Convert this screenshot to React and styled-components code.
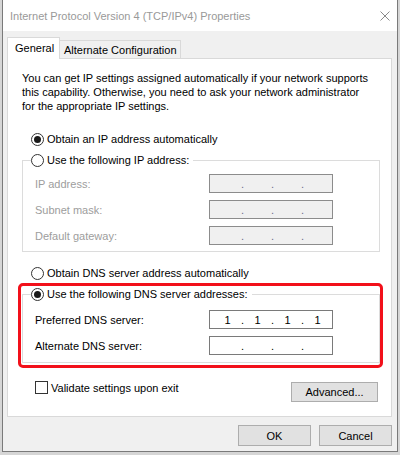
import React from "react";
import styled, { createGlobalStyle, css } from "styled-components";

const GlobalStyle = createGlobalStyle`
  html, body {
    margin: 0;
    padding: 0;
  }
  body {
    background: #d6d6d6;
    font-family: "Liberation Sans", Arial, sans-serif;
    font-size: 11px;
    color: #000;
  }
`;

const Window = styled.div`
  margin-left: 2px;
  width: 396px;
  box-sizing: border-box;
  border: 1px solid #7a7a7a;
  border-top: none;
  background: #f0f0f0;
`;

const TitleBar = styled.div`
  height: 31px;
  background: #fff;
  display: flex;
  align-items: center;
  justify-content: space-between;
  padding: 0 7px;
  color: #999;
`;

const Body = styled.div`
  padding: 6px 5px 5px 4px;
`;

const Tabs = styled.div`
  display: flex;
  align-items: flex-end;
  height: 22px;
  margin-bottom: -1px;
  position: relative;
  z-index: 1;
`;

const Tab = styled.div`
  box-sizing: border-box;
  border: 1px solid #d9d9d9;
  display: flex;
  align-items: center;
  line-height: 14px;
  white-space: nowrap;
  overflow: hidden;
  ${(p) =>
    p.$active
      ? css`
          height: 22px;
          width: 53px;
          border-bottom: none;
          background: #fff;
          padding: 0 7px 1px;
        `
      : css`
          height: 19px;
          width: 122px;
          margin-left: -1px;
          background: #f0f0f0;
          padding: 0 0 0 4px;
        `}
`;

const Panel = styled.div`
  box-sizing: border-box;
  height: 359px;
  background: #fff;
  border: 1px solid #d9d9d9;
  padding: 12px 11px 0 14px;
`;

const Description = styled.p`
  margin: 0;
  line-height: 14px;
`;

const RadioRow = styled.div`
  display: flex;
  align-items: center;
  gap: 3px;
  height: 16px;
  margin: ${(p) => p.$mt || 0}px 0 0 9px;
`;

const Radio = styled.span`
  box-sizing: border-box;
  width: 13px;
  height: 13px;
  border: 1px solid #333;
  border-radius: 50%;
  background: #fff;
  display: flex;
  align-items: center;
  justify-content: center;
  &::after {
    content: "";
    width: 7px;
    height: 7px;
    border-radius: 50%;
    background: ${(p) => (p.$checked ? "#1a1a1a" : "transparent")};
  }
`;

const Group = styled.fieldset`
  margin: ${(p) => p.$mt || 0}px 0 0;
  padding: 0;
  border: 1px solid #dcdcdc;
  min-width: 0;
`;

const Legend = styled.legend`
  margin-left: 8px;
  padding: 0 4px 0 0;
  height: 16px;
  display: flex;
  align-items: center;
  gap: 3px;
  background: #fff;
`;

const Rows = styled.div`
  display: flex;
  flex-direction: column;
  gap: 7px;
  padding: ${(p) => p.$pt}px 0 ${(p) => p.$pb}px 12px;
`;

const FieldRow = styled.div`
  display: flex;
  align-items: center;
  height: 19px;
`;

const FieldLabel = styled.span`
  width: 174px;
  color: ${(p) => (p.$disabled ? "#9d9d9d" : "#000")};
`;

const IpBox = styled.div`
  box-sizing: border-box;
  width: 124px;
  height: 19px;
  border: 1px solid ${(p) => (p.$disabled ? "#8c8c8c" : "#7a7a7a")};
  background: ${(p) => (p.$disabled ? "#f0f0f0" : "#fff")};
  display: flex;
  align-items: center;
  padding-left: 5px;
  color: ${(p) => (p.$disabled ? "#6d6d8d" : "#000")};
`;

const Octet = styled.span`
  width: 25px;
  text-align: center;
`;

const Dot = styled.span`
  width: 5px;
  text-align: center;
`;

const Highlight = styled.div`
  margin: 2px -3px 0 -4px;
  border: 3px solid #f2101a;
  border-radius: 5px;
  padding: 0 0 2px 1px;
`;

const Footer = styled.div`
  display: flex;
  justify-content: space-between;
  align-items: flex-start;
  margin-top: 13px;
  padding: 0 2px 0 13px;
`;

const CheckLabel = styled.label`
  display: flex;
  align-items: center;
  gap: 3px;
  height: 13px;
`;

const Checkbox = styled.span`
  box-sizing: border-box;
  width: 13px;
  height: 13px;
  border: 1px solid #333;
  background: #fff;
`;

const Button = styled.button`
  box-sizing: border-box;
  width: ${(p) => p.$w}px;
  height: ${(p) => p.$h}px;
  margin-top: ${(p) => p.$mt || 0}px;
  padding: 0;
  background: #e1e1e1;
  border: 1px solid #adadad;
  font: inherit;
  color: #000;
`;

const Buttons = styled.div`
  display: flex;
  justify-content: flex-end;
  gap: 8px;
  margin-top: 8px;
`;

const CloseIcon = () => (
  <svg width="10" height="10" viewBox="0 0 10 10">
    <path d="M0.5 0.5 L9.5 9.5 M9.5 0.5 L0.5 9.5" stroke="#8a8a8a" strokeWidth="1" />
  </svg>
);

const IpField = ({ values = ["", "", "", ""], disabled }) => (
  <IpBox $disabled={disabled}>
    {values.map((v, i) => (
      <React.Fragment key={i}>
        <Octet>{v}</Octet>
        {i < 3 && <Dot>.</Dot>}
      </React.Fragment>
    ))}
  </IpBox>
);

const Field = ({ label, values, disabled }) => (
  <FieldRow>
    <FieldLabel $disabled={disabled}>{label}</FieldLabel>
    <IpField values={values} disabled={disabled} />
  </FieldRow>
);

const App = () => {
  return (
    <>
      <GlobalStyle />
      <Window>
        <TitleBar>
          <span>Internet Protocol Version 4 (TCP/IPv4) Properties</span>
          <CloseIcon />
        </TitleBar>
        <Body>
          <Tabs>
            <Tab $active>General</Tab>
            <Tab>Alternate Configuration</Tab>
          </Tabs>
          <Panel>
            <Description>
              You can get IP settings assigned automatically if your network supports
              <br />
              this capability. Otherwise, you need to ask your network administrator
              <br />
              for the appropriate IP settings.
            </Description>

            <RadioRow $mt={18}>
              <Radio $checked />
              Obtain an IP address automatically
            </RadioRow>

            <Group $mt={5}>
              <Legend>
                <Radio />
                Use the following IP address:
              </Legend>
              <Rows $pt={6} $pb={6}>
                <Field label="IP address:" disabled />
                <Field label="Subnet mask:" disabled />
                <Field label="Default gateway:" disabled />
              </Rows>
            </Group>

            <RadioRow $mt={13}>
              <Radio />
              Obtain DNS server address automatically
            </RadioRow>

            <Highlight>
              <Group>
                <Legend>
                  <Radio $checked />
                  Use the following DNS server addresses:
                </Legend>
                <Rows $pt={8} $pb={7}>
                  <Field label="Preferred DNS server:" values={["1", "1", "1", "1"]} />
                  <Field label="Alternate DNS server:" />
                </Rows>
              </Group>
            </Highlight>

            <Footer>
              <CheckLabel>
                <Checkbox />
                Validate settings upon exit
              </CheckLabel>
              <Button $w={87} $h={20} $mt={1}>
                Advanced...
              </Button>
            </Footer>
          </Panel>
          <Buttons>
            <Button $w={73} $h={21}>
              OK
            </Button>
            <Button $w={73} $h={21}>
              Cancel
            </Button>
          </Buttons>
        </Body>
      </Window>
    </>
  );
};

export default App;
